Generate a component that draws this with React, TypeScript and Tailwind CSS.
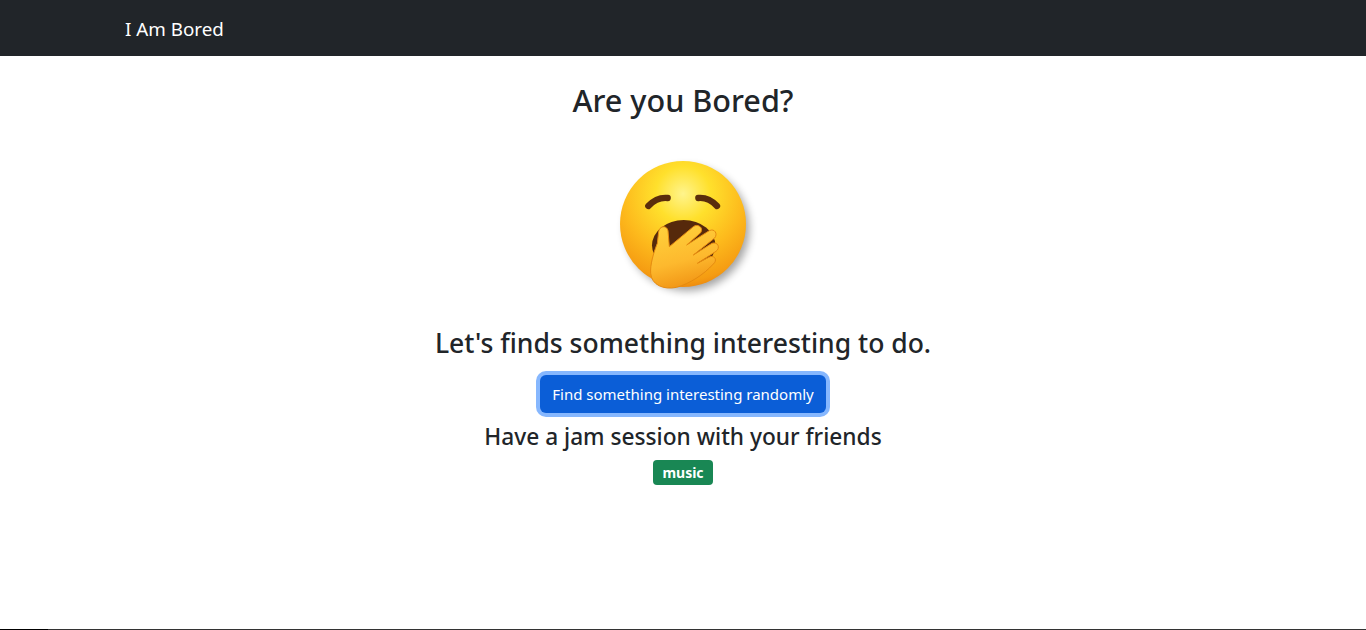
import React from 'react';

// Yawning face, drawn on a 450 unit grid
function YawnEmoji() {
  return (
    <svg viewBox="54 27 450 450" className="block w-[150px] h-[150px]">
      <defs>
        <radialGradient id="face" cx="50%" cy="26%" r="78%">
          <stop offset="0%" stopColor="#fff48c" />
          <stop offset="28%" stopColor="#ffe02c" />
          <stop offset="62%" stopColor="#fdb91c" />
          <stop offset="88%" stopColor="#f59c12" />
          <stop offset="100%" stopColor="#e87f0c" />
        </radialGradient>
        <linearGradient id="hand" gradientUnits="userSpaceOnUse" x1="80" y1="40" x2="130" y2="235">
          <stop offset="0%" stopColor="#ffd23c" />
          <stop offset="60%" stopColor="#fdb92e" />
          <stop offset="100%" stopColor="#f19414" />
        </linearGradient>
        <filter id="blur" x="-30%" y="-30%" width="160%" height="160%">
          <feGaussianBlur stdDeviation="13" />
        </filter>
      </defs>
      <circle cx="292" cy="266" r="186" fill="#000" opacity="0.36" filter="url(#blur)" />
      <circle cx="279" cy="252" r="189" fill="url(#face)" />
      <path d="M175 198C192 180 214 172 233 174" fill="none" stroke="#5a2d0c" strokeWidth="19" strokeLinecap="round" />
      <path d="M325 174C346 172 366 182 381 198" fill="none" stroke="#5a2d0c" strokeWidth="19" strokeLinecap="round" />
      <ellipse cx="281" cy="316" rx="95" ry="76" fill="#56290b" />
      <g transform="translate(150 210)">
        <path
          d="M32 190C30 165 40 130 52 100L56 65C58 48 80 44 84 62L88 110L160 50C172 40 192 52 182 68L140 105L208 62C224 54 234 72 224 84L160 135L216 100C234 94 242 114 228 124L172 160L210 140C226 136 232 152 220 162C190 195 150 220 110 232C70 240 35 225 32 190Z"
          fill="url(#hand)"
          stroke="#e58a10"
          strokeWidth="3"
          strokeLinejoin="round"
        />
      </g>
    </svg>
  );
}

export default function App() {
  return (
    <div className="min-h-[630px] flex flex-col bg-white text-[#212529] font-['Noto_Sans',sans-serif]">
      <nav className="h-14 bg-[#212529] flex items-center">
        <div className="w-[1140px] mx-auto px-3 pt-0.5">
          <a href="#" className="text-[18.8px] text-white">I Am Bored</a>
        </div>
      </nav>

      <main className="flex-1 flex flex-col items-center">
        <h1 className="mt-[25px] text-[30.6px] leading-[38px] font-medium">Are you Bored?</h1>
        <div className="mt-[30px]">
          <YawnEmoji />
        </div>
        <h2 className="mt-[27px] text-[26.5px] leading-[34px] font-medium">Let's finds something interesting to do.</h2>
        <button className="mt-[15px] h-[38px] w-[286px] rounded-[6px] bg-[#0b5ed7] text-white text-[15px] ring-4 ring-[#86b7fe]">
          Find something interesting randomly
        </button>
        <h3 className="mt-[9px] text-[22.7px] leading-[29px] font-medium">Have a jam session with your friends</h3>
        <span className="mt-[9px] w-[60px] h-[25px] flex items-center justify-center rounded bg-[#198754] text-white text-sm font-bold">
          music
        </span>
      </main>

      <div className="h-px flex">
        <div className="w-12 bg-black" />
        <div className="flex-1 bg-[#333333]" />
      </div>
    </div>
  );
}
